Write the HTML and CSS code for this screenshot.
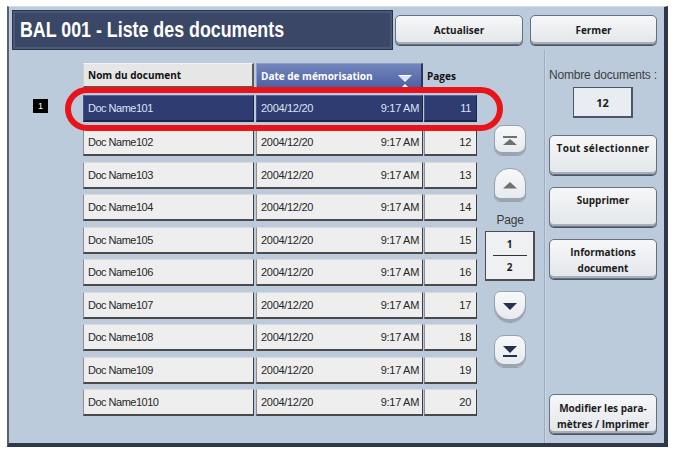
FILE: index.html
```html
<!DOCTYPE html>
<html lang="fr">
<head>
    <meta charset="UTF-8">
    <title>BAL 001 - Liste des documents</title>
    <link rel="stylesheet" href="styles.css">
</head>
<body>
    <div class="screen">
        <div class="topbar">
            <div class="title"><span class="title-text">BAL 001 - Liste des documents</span></div>
            <button class="btn top-btn">Actualiser</button>
            <button class="btn top-btn close">Fermer</button>
        </div>

        <div class="main">
            <div class="list">
                <div class="table">
                    <div class="row head">
                        <div class="idx"></div>
                        <div class="cell name hcell">Nom du document</div>
                        <div class="cell date hcell sorted">
                            Date de mémorisation
                            <svg class="sort" width="16" height="20" viewBox="0 0 16 20">
                                <polygon points="1,6 15,6 8,13" fill="#ffffff"/>
                                <line x1="3" y1="8" x2="13" y2="8" stroke="#b9c6e6" stroke-width="1"/>
                                <line x1="5" y1="10" x2="11" y2="10" stroke="#b9c6e6" stroke-width="1"/>
                                <polygon points="8,15 13,20 3,20" fill="#ffffff"/>
                            </svg>
                        </div>
                        <div class="cell pages hlabel">Pages</div>
                    </div>

                    <div class="row selected">
                        <div class="idx"><span class="badge">1</span></div>
                        <div class="cell name">Doc Name101</div>
                        <div class="cell date"><span>2004/12/20</span><span>9:17 AM</span></div>
                        <div class="cell pages">11</div>
                    </div>
                    <div class="row">
                        <div class="idx"></div>
                        <div class="cell name">Doc Name102</div>
                        <div class="cell date"><span>2004/12/20</span><span>9:17 AM</span></div>
                        <div class="cell pages">12</div>
                    </div>
                    <div class="row">
                        <div class="idx"></div>
                        <div class="cell name">Doc Name103</div>
                        <div class="cell date"><span>2004/12/20</span><span>9:17 AM</span></div>
                        <div class="cell pages">13</div>
                    </div>
                    <div class="row">
                        <div class="idx"></div>
                        <div class="cell name">Doc Name104</div>
                        <div class="cell date"><span>2004/12/20</span><span>9:17 AM</span></div>
                        <div class="cell pages">14</div>
                    </div>
                    <div class="row">
                        <div class="idx"></div>
                        <div class="cell name">Doc Name105</div>
                        <div class="cell date"><span>2004/12/20</span><span>9:17 AM</span></div>
                        <div class="cell pages">15</div>
                    </div>
                    <div class="row">
                        <div class="idx"></div>
                        <div class="cell name">Doc Name106</div>
                        <div class="cell date"><span>2004/12/20</span><span>9:17 AM</span></div>
                        <div class="cell pages">16</div>
                    </div>
                    <div class="row">
                        <div class="idx"></div>
                        <div class="cell name">Doc Name107</div>
                        <div class="cell date"><span>2004/12/20</span><span>9:17 AM</span></div>
                        <div class="cell pages">17</div>
                    </div>
                    <div class="row">
                        <div class="idx"></div>
                        <div class="cell name">Doc Name108</div>
                        <div class="cell date"><span>2004/12/20</span><span>9:17 AM</span></div>
                        <div class="cell pages">18</div>
                    </div>
                    <div class="row">
                        <div class="idx"></div>
                        <div class="cell name">Doc Name109</div>
                        <div class="cell date"><span>2004/12/20</span><span>9:17 AM</span></div>
                        <div class="cell pages">19</div>
                    </div>
                    <div class="row">
                        <div class="idx"></div>
                        <div class="cell name">Doc Name1010</div>
                        <div class="cell date"><span>2004/12/20</span><span>9:17 AM</span></div>
                        <div class="cell pages">20</div>
                    </div>
                </div>

                <div class="nav">
                    <div class="nav-btn first">
                        <svg width="16" height="10" viewBox="0 0 16 10">
                            <rect x="1" y="0" width="14" height="2" fill="#707070"/>
                            <polygon points="8,3 15,9 1,9" fill="#707070"/>
                        </svg>
                    </div>
                    <div class="nav-btn up">
                        <svg width="16" height="7" viewBox="0 0 16 7">
                            <polygon points="8,0 15,6.5 1,6.5" fill="#707070"/>
                        </svg>
                    </div>
                    <div class="page-label">Page</div>
                    <div class="page-box">
                        <span class="page-num">1</span>
                        <span class="page-line"></span>
                        <span class="page-num">2</span>
                    </div>
                    <div class="nav-btn down">
                        <svg width="18" height="8" viewBox="0 0 18 8">
                            <polygon points="2,0 16,0 9,7" fill="#27304d"/>
                        </svg>
                    </div>
                    <div class="nav-btn last">
                        <svg width="18" height="12" viewBox="0 0 18 12">
                            <polygon points="2,0 16,0 9,7" fill="#27304d"/>
                            <rect x="2" y="9" width="14" height="2" fill="#27304d"/>
                        </svg>
                    </div>
                </div>
            </div>

            <div class="side">
                <div class="count-label">Nombre documents :</div>
                <div class="count-box">12</div>
                <button class="btn side-btn">Tout sélectionner</button>
                <button class="btn side-btn">Supprimer</button>
                <button class="btn side-btn">Informations<br>document</button>
                <button class="btn side-btn print">Modifier les para-<br>mètres / Imprimer</button>
            </div>
        </div>

        <div class="highlight"></div>
    </div>
</body>
</html>
```

FILE: styles.css
```css
body {
    margin: 0;
    background: #ffffff;
    font-family: "Liberation Sans", Arial, sans-serif;
}
.screen {
    position: relative;
    box-sizing: border-box;
    width: 661px;
    height: 441px;
    margin: 6px 0 0 7px;
    background: #bccbdb;
    border-top: 1px solid #d5dce5;
    border-left: 2px solid #56627a;
    border-right: 4px solid #2f384a;
    border-bottom: 4px solid #2f384a;
    display: flex;
    flex-direction: column;
}

/* title bar */
.topbar {
    display: flex;
    align-items: flex-start;
    padding: 3px 0 0 3px;
    height: 43px;
    box-sizing: border-box;
}
.title {
    box-sizing: border-box;
    width: 381px;
    height: 40px;
    padding-left: 7px;
    display: flex;
    align-items: center;
    background: #3a4767;
    border: 1px solid #2a3349;
    box-shadow: inset 0 0 0 2px #4c5877;
    color: #ffffff;
    font-family: "Liberation Sans", Arial, sans-serif;
    font-weight: bold;
    font-size: 22px;
    overflow: hidden;
}
.title-text {
    display: inline-block;
    white-space: nowrap;
    transform: scaleX(0.81);
    transform-origin: left center;
}
.btn {
    font-family: "Open Sans", "DejaVu Sans", sans-serif;
    font-weight: bold;
    font-size: 10px;
    color: #1c1c1c;
    background: linear-gradient(#f6f7f8, #e3e6ea);
    border: 1px solid #66717f;
    border-radius: 5px;
    box-shadow: inset 0 -2px 0 #a7afb9, 0 1px 0 #4d5666;
    padding: 0;
    cursor: pointer;
}
.top-btn {
    width: 128px;
    height: 30px;
    margin: 5px 0 0 2px;
}
.top-btn.close {
    width: 127px;
    margin-left: 7px;
}

/* list */
.main {
    flex: 1;
    display: flex;
}
.list {
    width: 534px;
    display: flex;
}
.table {
    width: 468px;
    padding-top: 13px;
    display: flex;
    flex-direction: column;
    gap: 5.5px;
}
.row {
    display: flex;
    height: 27px;
}
.row.head {
    height: 25px;
}
.row.selected {
    margin-top: 1px;
    margin-bottom: 2px;
}
.idx {
    width: 74px;
    flex: none;
}
.badge {
    display: block;
    width: 15px;
    height: 14px;
    margin: 4px 0 0 24px;
    background: #000000;
    color: #ffffff;
    font-size: 9px;
    line-height: 14px;
    text-align: center;
}
.cell {
    box-sizing: border-box;
    display: flex;
    align-items: center;
    background: #eeeeee;
    border-top: 1px solid #dcdcdc;
    border-left: 1px solid #8e8e8e;
    border-right: 1px solid #3e3e3e;
    border-bottom: 2px solid #4a4a4a;
    color: #262626;
    font-size: 11px;
    letter-spacing: -0.3px;
}
.cell.name {
    width: 171px;
    padding-left: 4px;
    letter-spacing: -0.5px;
}
.cell.date {
    width: 167px;
    margin-left: 2px;
    padding: 0 3px 0 4px;
    justify-content: space-between;
}
.cell.pages {
    width: 53px;
    margin-left: 1px;
    padding-right: 5px;
    justify-content: flex-end;
}
.cell.hcell {
    font-family: "Open Sans", "DejaVu Sans", sans-serif;
    font-weight: bold;
    font-size: 10px;
    letter-spacing: 0;
    color: #111111;
    background: #e6e6e6;
    border-top: 1px solid #f4f4f4;
    border-left: 1px solid #cfcfcf;
    border-right: 2px solid #5a5a5a;
    border-bottom: 2px solid #5a5a5a;
}
.cell.hcell.sorted {
    position: relative;
    color: #ffffff;
    height: 26px;
    background: linear-gradient(#7386bd, #4d62a2);
    border-color: #8d9dcc #2a3562 #2a3562 #8d9dcc;
    padding-left: 4px;
    justify-content: flex-start;
}
.sort {
    position: absolute;
    right: 8px;
    bottom: -2px;
}
.cell.hlabel {
    background: none;
    border: none;
    font-family: "Open Sans", "DejaVu Sans", sans-serif;
    font-weight: bold;
    font-size: 10px;
    letter-spacing: 0;
    color: #111111;
    justify-content: flex-start;
    padding: 0 0 0 3px;
}
.row.selected .cell {
    background: #2e3c72;
    color: #dde3f2;
    border-top: 1px solid #5767a0;
    border-left: 1px solid #45548c;
    border-right: 1px solid #1d2448;
    border-bottom: 2px solid #1d2448;
}

/* page navigation */
.nav {
    width: 66px;
    display: flex;
    flex-direction: column;
    align-items: center;
    padding-top: 75px;
}
.nav-btn {
    box-sizing: border-box;
    width: 32px;
    height: 31px;
    display: flex;
    align-items: center;
    justify-content: center;
    background: linear-gradient(#f7f8f9, #e6e9ec);
    border: 1px solid #98a2ae;
    border-radius: 9px 9px 8px 8px;
    box-shadow: inset 0 -3px 0 #9ba5b2;
}
.nav-btn.up {
    height: 34px;
    margin-top: 12px;
    border-radius: 15px 15px 6px 6px;
}
.nav-btn.down {
    height: 32px;
    margin-top: 10px;
    border-radius: 6px 6px 15px 15px;
}
.nav-btn.last {
    height: 33px;
    margin-top: 12px;
    border-radius: 10px;
}
.page-label {
    margin-top: 11px;
    font-size: 12px;
    line-height: 14px;
    color: #3a3a3a;
    letter-spacing: -0.2px;
}
.page-box {
    box-sizing: border-box;
    width: 50px;
    height: 50px;
    margin-top: 4px;
    display: flex;
    flex-direction: column;
    align-items: center;
    justify-content: center;
    background: #eef0f2;
    border: 1px solid #4e4e4e;
    border-right-width: 2px;
    border-bottom-width: 2px;
    font-family: "Open Sans", "DejaVu Sans", sans-serif;
    font-weight: bold;
    font-size: 10px;
    color: #1c1c1c;
}
.page-line {
    width: 34px;
    height: 1px;
    background: #333333;
    margin: 4px 0;
}

/* right column */
.side {
    flex: 1;
    display: flex;
    flex-direction: column;
    align-items: center;
    padding: 0 7px 9px 4px;
    border-left: 1px solid #9cadc0;
    box-shadow: inset 1px 0 0 #cbd6e2;
    margin-left: 1px;
}
.count-label {
    margin-top: 18px;
    font-size: 12px;
    letter-spacing: -0.2px;
    color: #3e3e3e;
    white-space: nowrap;
}
.count-box {
    box-sizing: border-box;
    width: 60px;
    height: 31px;
    margin-top: 5px;
    display: flex;
    align-items: center;
    justify-content: center;
    background: #e9edf1;
    border: 1px solid #4f5560;
    border-right-width: 2px;
    border-bottom-width: 2px;
    font-family: "Open Sans", "DejaVu Sans", sans-serif;
    font-weight: bold;
    font-size: 11px;
    color: #1c1c1c;
}
.side-btn {
    width: 108px;
    height: 40px;
    margin-top: 12px;
    padding-top: 4px;
    display: flex;
    align-items: flex-start;
    justify-content: center;
    line-height: 16px;
}
.side-btn:first-of-type {
    margin-top: 17px;
    letter-spacing: 0.3px;
}
.side-btn.print {
    margin-top: auto;
    padding-top: 3px;
    align-items: center;
}

/* red marker around the selected row */
.highlight {
    position: absolute;
    left: 56px;
    top: 80px;
    width: 438px;
    height: 44px;
    box-sizing: border-box;
    border: 6px solid #e8141a;
    border-radius: 22px;
}
```
